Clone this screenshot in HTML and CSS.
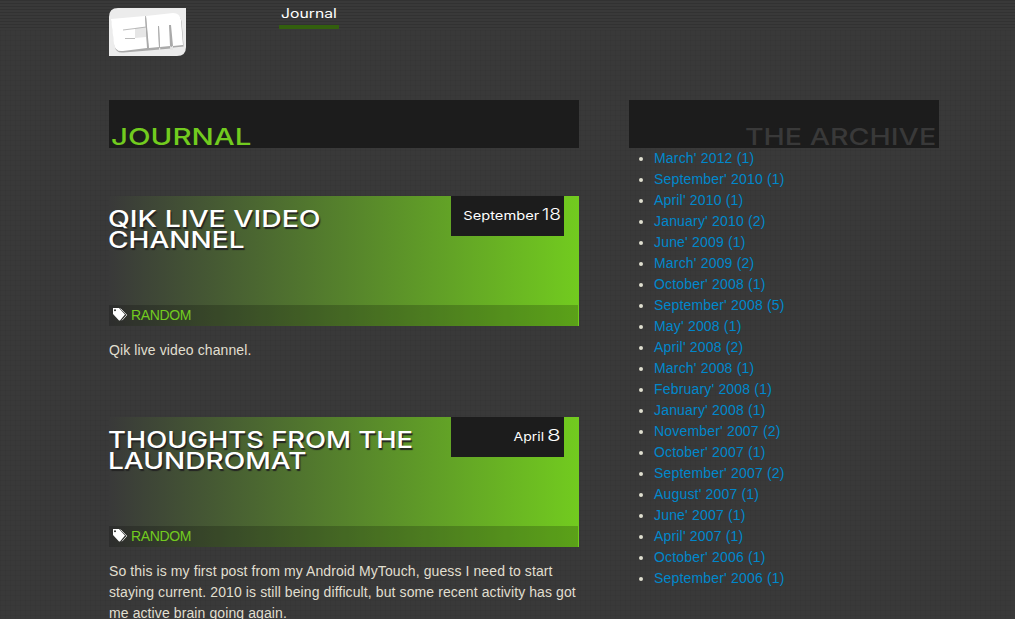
FILE: index.html
```html
<!DOCTYPE html>
<html lang="en">
<head>
<meta charset="utf-8">
<title>Journal</title>
<link rel="stylesheet" href="styles.css">
</head>
<body>
<div class="page">
  <header class="top">
    <svg class="logo" width="77" height="48" viewBox="0 0 77 48" role="img" aria-label="EM">
      <path fill="#ececec" d="M9 0H77V39Q77 48 68 48H0V9Q0 0 9 0Z"/>
      <path fill="#aaa" transform="translate(.6 1.4)" d="M2 11L36 8L64 5Q71 5 72 12L74 37L64 38L61 39L50 40L39 41L14 43Q6 44 5 36Z"/>
      <path fill="#fff" d="M2 11L36 8L38 40L14 43Q6 44 5 36Z"/>
      <path fill="#fff" d="M37 8L64 5Q71 5 72 12L74 37L64 38L62 17L60 17L61 38L51 39L50 18L49 18L50 39L40 40Z"/>
      <path fill="#e6e6e6" d="M26 20L37 19V29L26 30Z"/>
      <path fill="#e6e6e6" d="M50 39.5H51.2V42H50ZM61 38.5L64 38V42H61.3Z"/>
      <path fill="none" stroke="#aaa" stroke-width=".8" d="M14 22L26 20.5L37 19M16 30.5H26M36.5 8L39 41M49.5 18L50.5 40M61 17L62.5 39"/>
    </svg>
    <nav class="nav"><a class="nav-link"><span class="wide nav-text">Journal</span></a></nav>
  </header>
  <div class="columns">
    <main class="main">
      <h1 class="bar bar-main"><span class="wide journal">JOURNAL</span></h1>
      <article class="post">
        <div class="banner">
          <h2 class="title"><span class="wide t1">QIK LIVE VIDEO</span><span class="wide t2">CHANNEL</span></h2>
          <div class="date"><span class="wide d1">September</span><span class="wide day n1">18</span></div>
          <div class="tags"><svg class="tag" width="15" height="13" viewBox="0 0 15 13"><path fill="#fff" fill-rule="evenodd" d="M0 0H6L12 6.5L7 12.5H6L0 6ZM2 1.3A1 1 0 1 0 2 3.3A1 1 0 1 0 2 1.3"/><path fill="none" stroke="#ccc" d="M7.5 .5L13.8 7L9 12.3"/></svg><a>RANDOM</a></div>
        </div>
        <p class="copy">Qik live video channel.</p>
      </article>
      <article class="post">
        <div class="banner">
          <h2 class="title"><span class="wide t3">THOUGHTS FROM THE</span><span class="wide t4">LAUNDROMAT</span></h2>
          <div class="date"><span class="wide d2">April</span><span class="wide day n2">8</span></div>
          <div class="tags"><svg class="tag" width="15" height="13" viewBox="0 0 15 13"><path fill="#fff" fill-rule="evenodd" d="M0 0H6L12 6.5L7 12.5H6L0 6ZM2 1.3A1 1 0 1 0 2 3.3A1 1 0 1 0 2 1.3"/><path fill="none" stroke="#ccc" d="M7.5 .5L13.8 7L9 12.3"/></svg><a>RANDOM</a></div>
        </div>
        <p class="copy">So this is my first post from my Android MyTouch, guess I need to start staying current. 2010 is still being difficult, but some recent activity has got me active brain going again.</p>
      </article>
    </main>
    <aside class="side">
      <h2 class="bar bar-side"><span class="wide archive-title">THE ARCHIVE</span></h2>
      <ul class="archive">
        <li><a>March' 2012 (1)</a></li>
        <li><a>September' 2010 (1)</a></li>
        <li><a>April' 2010 (1)</a></li>
        <li><a>January' 2010 (2)</a></li>
        <li><a>June' 2009 (1)</a></li>
        <li><a>March' 2009 (2)</a></li>
        <li><a>October' 2008 (1)</a></li>
        <li><a>September' 2008 (5)</a></li>
        <li><a>May' 2008 (1)</a></li>
        <li><a>April' 2008 (2)</a></li>
        <li><a>March' 2008 (1)</a></li>
        <li><a>February' 2008 (1)</a></li>
        <li><a>January' 2008 (1)</a></li>
        <li><a>November' 2007 (2)</a></li>
        <li><a>October' 2007 (1)</a></li>
        <li><a>September' 2007 (2)</a></li>
        <li><a>August' 2007 (1)</a></li>
        <li><a>June' 2007 (1)</a></li>
        <li><a>April' 2007 (1)</a></li>
        <li><a>October' 2006 (1)</a></li>
        <li><a>September' 2006 (1)</a></li>
      </ul>
    </aside>
  </div>
</div>
</body>
</html>
```
FILE: styles.css
```css
* { box-sizing: border-box; margin: 0; padding: 0; }
body {
  height: 619px;
  overflow: hidden;
  color: #e0dfd0;
  font: 14px/21px "Liberation Sans", Arial, sans-serif;
  background:
    repeating-linear-gradient(#323232 0 1px, #393939 1px 3px) 0 0 / 100% 30px no-repeat,
    repeating-linear-gradient(rgba(0,0,0,.035) 0 1px, transparent 1px 5px),
    repeating-linear-gradient(90deg, rgba(0,0,0,.035) 0 1px, transparent 1px 5px),
    #393939;
}
.page { width: 830px; margin-left: 109px; padding-top: 8px; }
.top { display: flex; height: 92px; align-items: flex-start; }
.logo { display: block; }
.nav { margin-left: 93px; }
.nav-link { display: block; width: 60px; height: 21px; border-bottom: 4px solid #335f0e; padding-left: 2px; line-height: 12px; color: #fff; }
.wide { display: block; width: max-content; font-family: Inter, Roboto, sans-serif; white-space: nowrap; transform-origin: left center; }
.nav-text { font-size: 12.5px; transform: scaleX(1.26); }
.columns { display: flex; gap: 50px; }
.main { width: 470px; }
.side { width: 310px; }
.bar { display: flex; align-items: flex-end; height: 48px; padding: 0 3px; background: #1c1c1c; font-size: 23.5px; line-height: 23px; font-weight: 500; }
.bar-main { padding-left: 2px; color: #72cb1f; }
.bar-side { color: #393939; justify-content: flex-end; }
.journal { transform: scaleX(1.255); }
.archive-title { transform: scaleX(1.217); transform-origin: right center; }
.post { margin-top: 48px; }
.banner { display: grid; grid-template: 109px 21px / 342px 113px 15px; background: linear-gradient(90deg, #393939, #72cb1f); }
.title { padding-top: 13px; margin-left: -1px; color: #fff; font-size: 23px; line-height: 21px; font-weight: 500; text-shadow: 1px 2px 1px #222; }
.t1 { transform: scaleX(1.235); }
.t2 { transform: scaleX(1.22); }
.t3 { transform: scaleX(1.19); }
.t4 { transform: scaleX(1.22); }
.date { display: flex; justify-content: flex-end; align-items: baseline; height: 40px; padding: 8px 3px 0 0; background: #1c1c1c; color: #fff; font-size: 12px; }
.date .wide { transform-origin: right center; transform: scaleX(1.2); }
.date .d1 { transform: scaleX(1.22); }
.date .d2 { transform: scaleX(1.17); }
.date .day { font-size: 16px; margin-left: 6px; font-weight: 300; }
.date .n2 { transform: scaleX(1.4); margin-left: 7px; }
.tags { grid-column: 1 / -1; display: flex; margin-right: 1px; padding: 0 4px; background: rgba(0,0,0,.2); color: #72cb1f; letter-spacing: -.35px; }
.tag { margin: 3px 3px 0 0; }
.copy { margin-top: 14px; letter-spacing: .1px; }
.post + .post { margin-top: 56px; }
.archive { padding-left: 25px; letter-spacing: .18px; }
.archive a { color: #08c; }
```
